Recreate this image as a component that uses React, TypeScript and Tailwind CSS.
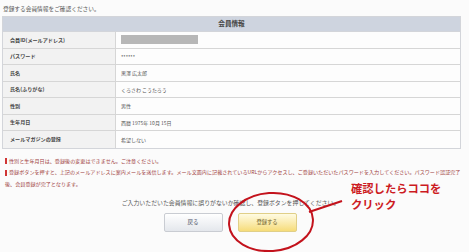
import React from "react"

const rows: [string, React.ReactNode][] = [
  ["会員ID(メールアドレス)", <span className="inline-block h-[9px] w-[77px] bg-[#b7b7b7] align-middle" />],
  ["パスワード", "******"],
  ["氏名", "黒澤 広太郎"],
  ["氏名(ふりがな)", "くろさわ こうたろう"],
  ["性別", "男性"],
  ["生年月日", "西暦 1975年 10月 15日"],
  ["メールマガジンの登録", "希望しない"],
]

export default function App() {
  return (
    <div className="relative h-[252px] w-[469px] overflow-hidden bg-[#fbfbfb] font-['Noto_Sans_CJK_JP','Noto_Sans',sans-serif] text-[#444]">
      <p className="pl-[3px] pt-[4px] text-[5.7px] leading-[9px] text-[#555]">登録する会員情報をご確認ください。</p>

      {/* 会員情報テーブル */}
      <div className="mx-[2px] mt-[3px] w-[459px] border border-[#d3d5da]">
        <div className="flex h-[15px] items-center justify-center border-b border-[#d3d5da] bg-[#ced4df] text-[6.6px] font-bold text-[#444]">
          会員情報
        </div>
        {rows.map(([label, value], i) => (
          <div key={i} className={`grid h-[16.5px] grid-cols-[113px_1fr] ${i < rows.length - 1 ? "border-b border-[#d6d6d6]" : ""}`}>
            <div className="flex items-center border-r border-[#d6d6d6] bg-[#f2f2f2] pl-[7px] text-[5.1px] font-bold text-[#444]">
              {label}
            </div>
            <div className="flex items-center bg-[#fdfdfd] pl-[5px] text-[5px] text-[#555]">{value}</div>
          </div>
        ))}
      </div>

      {/* 注意事項 */}
      <div className="mt-[6px] pl-[5px] text-[5.1px] leading-[11.5px] text-[#a04040]">
        <p className="whitespace-nowrap">
          <span className="mr-[2px] inline-block h-[6px] w-[2px] bg-[#d03535] align-middle" />
          性別と生年月日は、登録後の変更はできません。ご注意ください。
        </p>
        <p className="whitespace-nowrap">
          <span className="mr-[2px] inline-block h-[6px] w-[2px] bg-[#d03535] align-middle" />
          登録ボタンを押すと、上記のメールアドレスに案内メールを送信します。メール文面内に記載されているURLからアクセスし、ご登録いただいたパスワードを入力してください。パスワード認証完了
          <br />
          後、会員登録が完了となります。
        </p>
      </div>

      {/* 確認メッセージとボタン */}
      <p className="mt-[10px] pr-[8px] text-center text-[5.9px] leading-[8px] text-[#555]">
        ご入力いただいた会員情報に誤りがないか確認し、登録ボタンを押してください。
      </p>
      <div className="mt-[6px] flex justify-center gap-[15px] pr-[9px]">
        <button className="flex h-[19px] w-[59px] items-center justify-center rounded-[2px] border border-[#c9ccd2] bg-gradient-to-b from-[#ffffff] to-[#e4e7ec] text-[5.5px] text-[#4a4f66]">
          戻る
        </button>
        <button className="flex h-[19px] w-[59px] items-center justify-center rounded-[2px] border border-[#e0cf88] bg-gradient-to-b from-[#fffbe2] to-[#f6dc78] text-[5.3px] text-[#6d5c24]">
          登録する
        </button>
      </div>

      {/* 注釈 */}
      <svg className="absolute left-0 top-0" width="469" height="252" viewBox="0 0 469 252">
        <ellipse cx="271" cy="222" rx="42" ry="29" fill="none" stroke="#c3121c" strokeWidth="2" transform="rotate(-4 271 222)" />
        <line x1="309" y1="212" x2="342" y2="201" stroke="#c3121c" strokeWidth="2" />
      </svg>
      <div className="absolute left-[351px] top-[180px] text-[11.3px] font-bold leading-[16px] text-[#cc1a22]">
        <p>確認したらココを</p>
        <p>クリック</p>
      </div>
    </div>
  )
}
